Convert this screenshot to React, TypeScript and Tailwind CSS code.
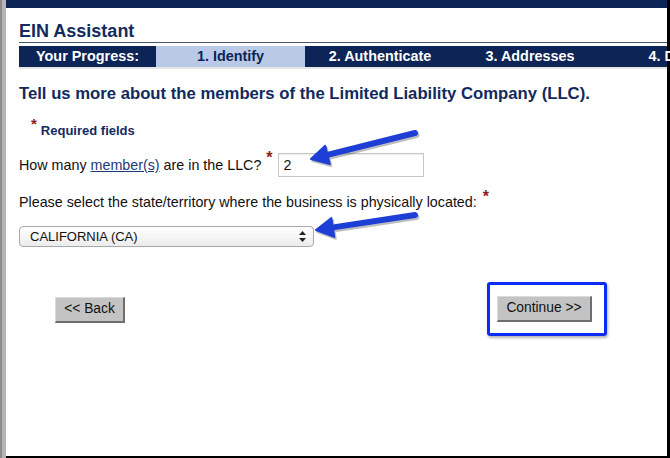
import React from "react";

function Arrow({ tail, tip }: { tail: [number, number]; tip: [number, number] }) {
  const dx = tail[0] - tip[0];
  const dy = tail[1] - tip[1];
  const len = Math.hypot(dx, dy);
  const ux = dx / len;
  const uy = dy / len;
  const hl = 17;
  const hw = 9.5;
  const bx = tip[0] + ux * hl;
  const by = tip[1] + uy * hl;
  const px = -uy;
  const py = ux;
  const pts = `${tip[0]},${tip[1]} ${bx + px * hw},${by + py * hw} ${bx - px * hw},${by - py * hw}`;
  return (
    <g>
      <g transform="translate(1.5,2)" opacity="0.25">
        <line x1={tail[0]} y1={tail[1]} x2={bx + ux * 2} y2={by + uy * 2} stroke="#000" strokeWidth="6" strokeLinecap="round" />
        <polygon points={pts} fill="#000" stroke="#000" strokeWidth="2" strokeLinejoin="round" />
      </g>
      <line x1={tail[0]} y1={tail[1]} x2={bx + ux * 2} y2={by + uy * 2} stroke="#1e3fd6" strokeWidth="6" strokeLinecap="round" />
      <polygon points={pts} fill="#1e3fd6" stroke="#1e3fd6" strokeWidth="2" strokeLinejoin="round" />
    </g>
  );
}

export default function App() {
  return (
    <div className="relative w-[670px] h-[458px] flex bg-white overflow-hidden font-['Liberation_Sans',Arial,sans-serif]">
      <div className="w-[6px] shrink-0 bg-[#b4b4b4] border-l-2 border-[#8a8a8a]" />
      <div className="flex-1 min-w-0 flex flex-col border-r-[3px] border-b-2 border-black">
        <div className="h-[8px] bg-[#0c2456] shrink-0" />
        <div className="pl-[13px] flex flex-col">
          <div className="pt-[13px] h-[34px] text-[18px] font-bold text-[#132b5e] leading-[20px]">EIN Assistant</div>
          <div className="h-px bg-[#4a5670]" />
          <div className="mt-[3px] h-[21px] flex bg-[#0c2456] text-[14.4px] font-bold leading-[21px] whitespace-nowrap">
            <div className="w-[137px] shrink-0 text-center text-white">Your Progress:</div>
            <div className="w-[149px] shrink-0 text-center bg-[#b9c9e6] text-[#0c2456]">1. Identify</div>
            <div className="w-[150px] shrink-0 text-center text-white">2. Authenticate</div>
            <div className="w-[150px] shrink-0 text-center text-white">3. Addresses</div>
            <div className="w-[150px] shrink-0 text-center text-white">4. Details</div>
          </div>
          <div className="h-[2px] bg-[#e6e6e6]" />
          <div className="mt-[15px] text-[16.7px] font-bold text-[#112a5d] leading-[20px] whitespace-nowrap">
            Tell us more about the members of the Limited Liability Company (LLC).
          </div>
          <div className="mt-[14px] pl-[12px] flex items-start text-[13px] font-bold text-[#132b5e] leading-[16px]">
            <span className="text-[#8e1c1c] text-[15px] leading-[12px]">*</span>
            <span className="ml-[4px] mt-[5px]">Required fields</span>
          </div>
          <div className="mt-[14px] flex items-center text-[14.3px] text-[#111] leading-[18px]">
            <span>
              How many <span className="underline text-[#1d3a78]">member(s)</span> are in the LLC?
            </span>
            <span className="ml-[5px] self-start mt-[-2px] text-[#8e1c1c] text-[16px] font-bold leading-[14px]">*</span>
            <div className="ml-[5px] w-[146px] h-[24px] border border-[#c8c8c8] shadow-[inset_0_1px_1px_rgba(0,0,0,0.08)] pl-[5px] leading-[22px] text-[14.3px]">
              2
            </div>
          </div>
          <div className="mt-[16px] flex items-start text-[14.3px] text-[#111] leading-[18px]">
            <span>Please select the state/territory where the business is physically located:</span>
            <span className="ml-[6px] mt-[-3px] text-[#8e1c1c] text-[16px] font-bold leading-[14px]">*</span>
          </div>
          <div className="mt-[15px] w-[295px] h-[21px] rounded-[4px] border border-[#a9a9a9] bg-gradient-to-b from-white to-[#ececec] flex items-center pl-[10px] pr-[7px] text-[13px] text-[#111]">
            <span className="flex-1">CALIFORNIA (CA)</span>
            <svg width="7" height="11" viewBox="0 0 7 11">
              <polygon points="3.5,0 7,4 0,4" fill="#222" />
              <polygon points="0,7 7,7 3.5,11" fill="#222" />
            </svg>
          </div>
          <div className="mt-[35px] flex items-start">
            <div className="ml-[36px] mt-[15px] w-[70px] h-[26px] bg-[#c3c3c3] border-r-2 border-b-2 border-[#6e6e6e] border-t border-l border-t-[#dcdcdc] border-l-[#dcdcdc] flex items-center justify-center text-[13.8px] text-[#111]">
              &lt;&lt; Back
            </div>
            <div className="ml-[362px] w-[120px] h-[54px] rounded-[3px] border-[3px] border-[#0b2cf5] shadow-[1px_2px_3px_rgba(0,0,0,0.3)] flex items-center pl-[7px]">
              <div className="w-[95px] h-[26px] bg-[#c3c3c3] border-r-2 border-b-2 border-[#6e6e6e] border-t border-l border-t-[#dcdcdc] border-l-[#dcdcdc] flex items-center justify-center text-[13.8px] text-[#111]">
                Continue &gt;&gt;
              </div>
            </div>
          </div>
        </div>
      </div>
      <svg className="absolute inset-0 pointer-events-none" width="670" height="458">
        <Arrow tail={[415, 133]} tip={[311, 159]} />
        <Arrow tail={[415, 215]} tip={[316, 230]} />
      </svg>
    </div>
  );
}
